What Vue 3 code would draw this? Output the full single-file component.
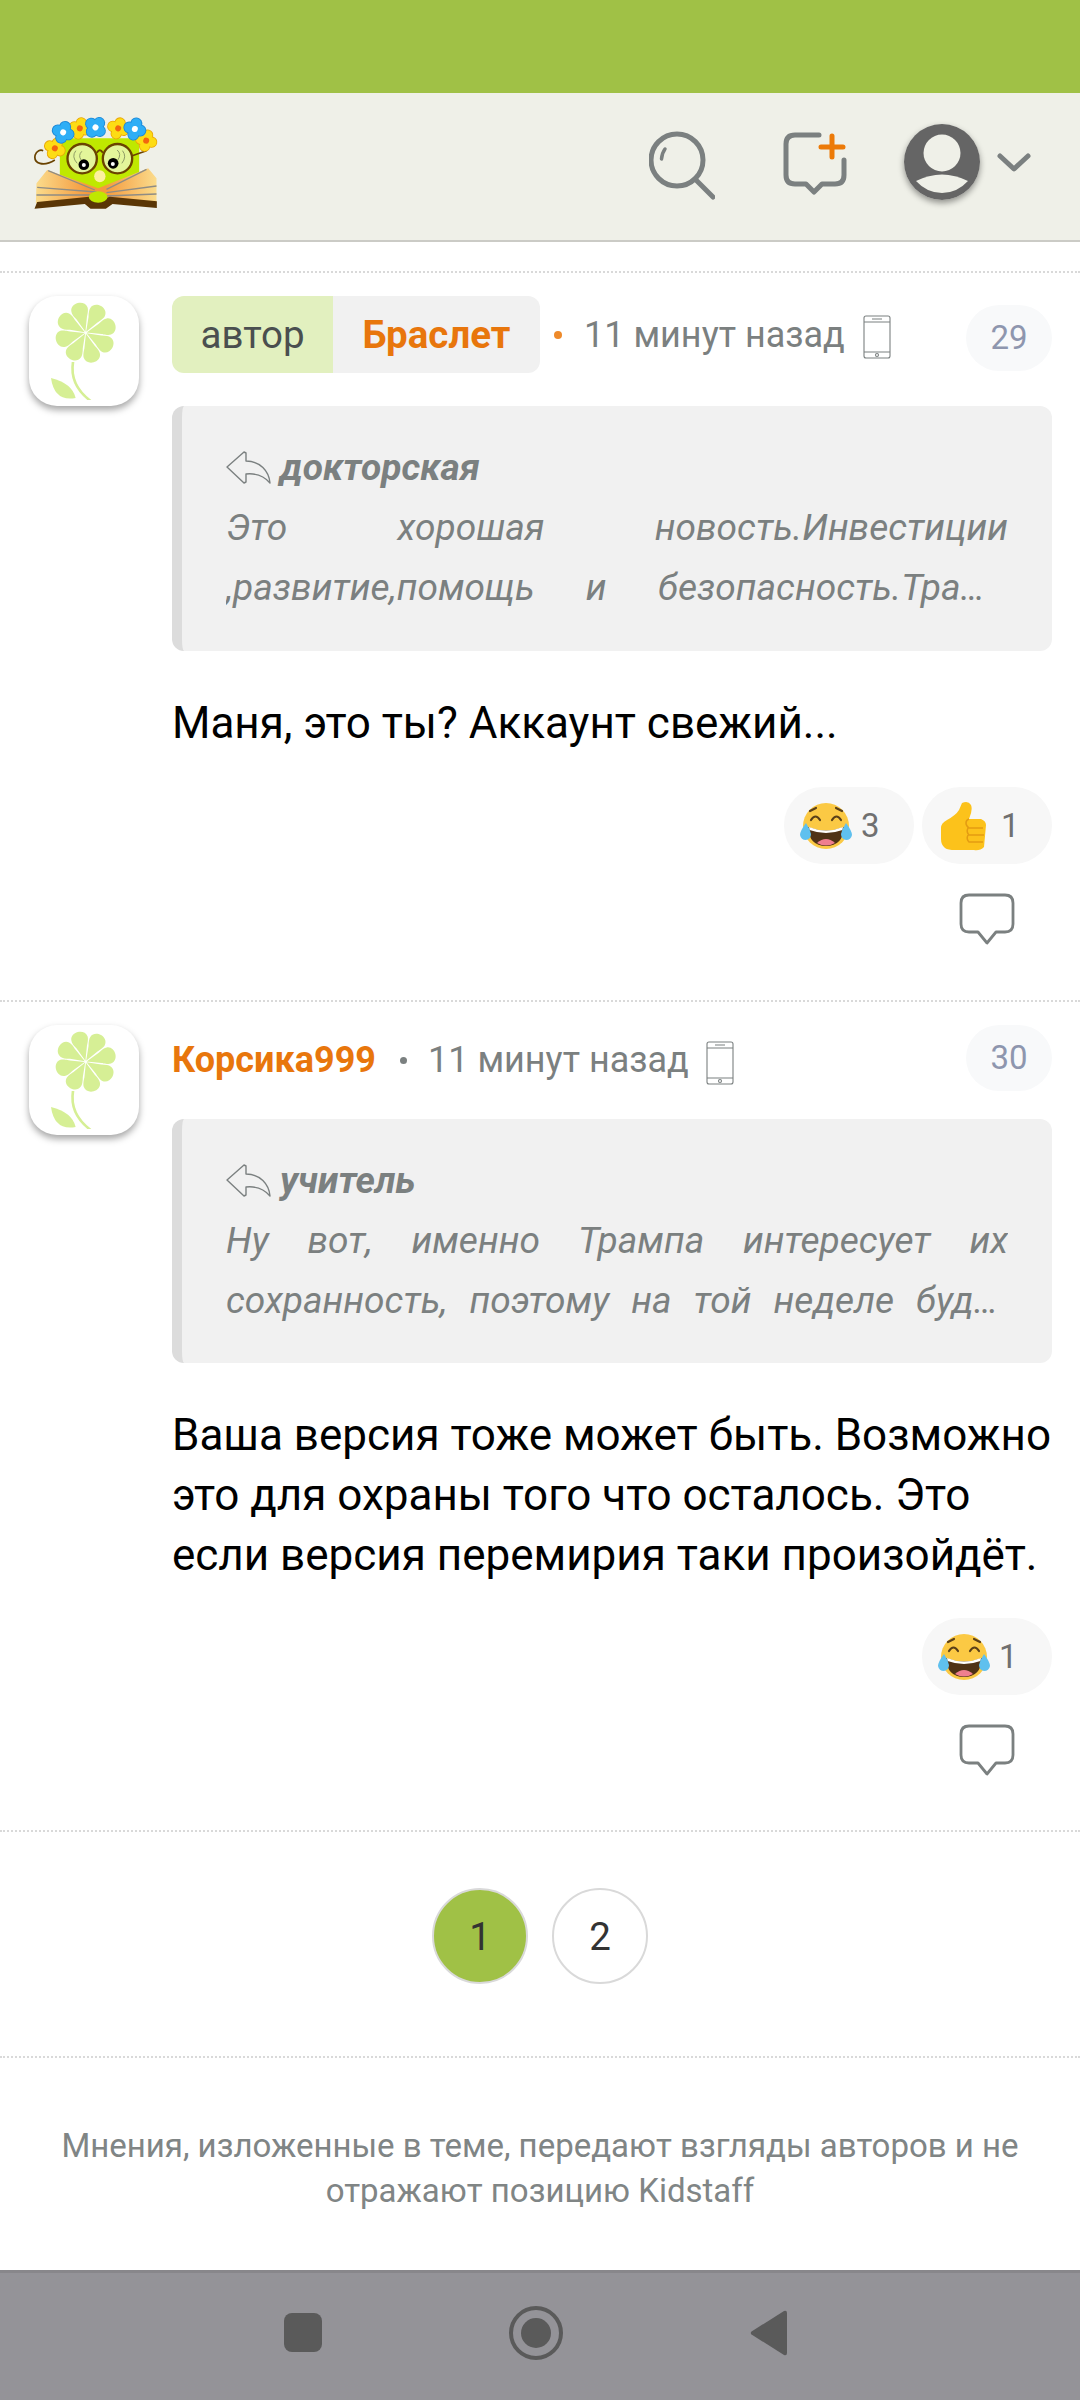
<script setup>
const comments = [
  {
    id: 1, num: 29, isAuthor: true, name: 'Браслет', quoteName: 'докторская',
    quote: 'Это хорошая новость.Инвестиции ,развитие,помощь и безопасность.Трамп хорошо понимает что происходит и это всем нам на пользу',
    body: 'Маня, это ты? Аккаунт свежий...',
    reactions: [{ k: 'laugh', n: 3 }, { k: 'thumb', n: 1 }],
  },
  {
    id: 2, num: 30, isAuthor: false, name: 'Корсика999', quoteName: 'учитель',
    quote: 'Ну вот, именно Трампа интересует их сохранность, поэтому на той неделе будут переговоры и наверное какие-то решения',
    body: 'Ваша версия тоже может быть. Возможно это для охраны того что осталось. Это если версия перемирия таки произойдёт.',
    reactions: [{ k: 'laugh', n: 1 }],
  },
]
const petals = [0, 45, 90, 135, 180, 225, 270, 315]
</script>

<template>
  <div class="page">
    <div class="status"></div>
    <header class="top">
      <svg class="logo" viewBox="100 90 380 300">
        <defs>
          <g id="fb">
            <g fill="#1a86d6"><circle cx="0" cy="-17" r="18"/><circle cx="17" cy="0" r="18"/><circle cx="0" cy="17" r="18"/><circle cx="-17" cy="0" r="18"/></g>
            <g fill="#2eaef6"><circle cx="0" cy="-17" r="15.500"/><circle cx="17" cy="0" r="15.500"/><circle cx="0" cy="17" r="15.500"/><circle cx="-17" cy="0" r="15.500"/></g>
            <circle r="9" fill="#fff"/>
          </g>
          <g id="fy">
            <g fill="#e9a506"><circle cx="0" cy="-17" r="17"/><circle cx="17" cy="0" r="17"/><circle cx="0" cy="17" r="17"/><circle cx="-17" cy="0" r="17"/></g>
            <g fill="#fddc14"><circle cx="0" cy="-17" r="14.500"/><circle cx="17" cy="0" r="14.500"/><circle cx="0" cy="17" r="14.500"/><circle cx="-17" cy="0" r="14.500"/></g>
            <circle r="9" fill="#f2660f"/>
          </g>
          <linearGradient id="pg" x1="0" x2="1" y1="0" y2="0">
            <stop offset="0" stop-color="#fbdc8c"/><stop offset=".42" stop-color="#f49a3e"/>
            <stop offset=".58" stop-color="#f49a3e"/><stop offset="1" stop-color="#fbdc8c"/>
          </linearGradient>
        </defs>
        <path d="M180 175H418V300L300 340 180 300Z" fill="#bfe800"/>
        <path d="M165 240C130 262 100 250 106 225 110 212 122 208 130 212" fill="none" stroke="#6a4300" stroke-width="5"/>
        <path d="M395 228L440 212" stroke="#6a4300" stroke-width="5"/>
        <use href="#fy" transform="translate(165 205) rotate(25)"/>
        <use href="#fy" transform="translate(240 145) rotate(15)"/>
        <use href="#fy" transform="translate(355 145) rotate(20)"/>
        <use href="#fy" transform="translate(439 182) rotate(15)"/>
        <use href="#fb" transform="translate(190 157) rotate(20)"/>
        <use href="#fb" transform="translate(287 142) rotate(40)"/>
        <use href="#fb" transform="translate(405 147) rotate(15)"/>
        <circle cx="247" cy="236" r="44" fill="#e3f59a" stroke="#6a4300" stroke-width="7"/>
        <circle cx="353" cy="236" r="44" fill="#e3f59a" stroke="#6a4300" stroke-width="7"/>
        <path d="M291 218Q300 204 309 218" fill="none" stroke="#6a4300" stroke-width="6"/>
        <path d="M228 212Q214 230 232 250M246 214Q234 226 244 240M352 210Q366 222 354 240M368 212Q382 230 366 250" fill="none" stroke="#8f9c66" stroke-width="3"/>
        <circle cx="252" cy="254" r="16" fill="#000"/><circle cx="252" cy="255" r="6" fill="#fff"/>
        <circle cx="340" cy="250" r="16" fill="#000"/><circle cx="339" cy="252" r="6" fill="#fff"/>
        <ellipse cx="300" cy="289" rx="17" ry="18" fill="#fdf0a0"/>
        <path d="M110 310L142 270 295 325 445 265 470 295V370H108Z" fill="url(#pg)"/>
        <path d="M112 322L290 336M110 345L285 345M145 272L285 330M470 318L320 338M470 342L320 348M440 268L320 328" stroke="#8f8c84" stroke-width="4" fill="none"/>
        <path d="M104 386L112 366 268 350 295 362 330 350 471 364V384L338 372 318 386H272L255 372Z" fill="#5a3606"/>
        <ellipse cx="295" cy="351" rx="28" ry="17" fill="#bfe800"/>
      </svg>
      <div class="actions">
        <svg class="ic-search" viewBox="0 0 66 72" fill="none" stroke="#7b8080" stroke-linecap="round">
          <circle cx="28" cy="29" r="26" stroke-width="5"/>
          <path d="M46 48L64 66" stroke-width="5"/>
          <path d="M16 18Q13 22 12.500 28" stroke-width="3.500"/>
        </svg>
        <svg class="ic-add" viewBox="0 0 64 64" fill="none">
          <path d="M36 3H12Q3 3 3 12V43Q3 52 12 52H23L31 60 39 52H52Q61 52 61 43V28" stroke="#7b8080" stroke-width="5" stroke-linecap="round" stroke-linejoin="round"/>
          <path d="M49 4V25M38 15H60" stroke="#ec7a08" stroke-width="5" stroke-linecap="round"/>
        </svg>
        <div class="user">
          <svg viewBox="0 0 76 76">
            <circle cx="38" cy="38" r="38" fill="#656565"/>
            <circle cx="38" cy="29" r="18.500" fill="#eff0e8"/>
            <path d="M12 57Q38 44 64 57 53 69 38 69 23 69 12 57Z" fill="#eff0e8"/>
          </svg>
        </div>
        <svg class="ic-chev" viewBox="0 0 34 20" fill="none"><path d="M3 3L17 16 31 3" stroke="#7b8080" stroke-width="5" stroke-linecap="round" stroke-linejoin="round"/></svg>
      </div>
    </header>

    <main class="list">
      <article v-for="c in comments" :key="c.id" class="comment" :class="{ second: !c.isAuthor }">
        <div class="avatar">
          <svg viewBox="0 0 330 330">
            <path d="M136 198Q125 265 187 312H175Q118 265 128 198Z" fill="#d6ef95"/>
            <path d="M66 246Q130 262 140 306 76 318 66 246Z" fill="#d6ef95"/>
            <g fill="#d6ef95">
              <path v-for="p in petals" :key="p" d="M170 107L154 65Q144 48 145 38C146 25 158 18 170 18 182 18 194 25 195 38 196 48 186 65 186 65Z" :transform="`rotate(${p - 15} 170 110)`"/>
            </g>
          </svg>
        </div>
        <div class="main">
          <div class="meta">
            <div v-if="c.isAuthor" class="badge"><span class="role">автор</span><span class="bname">{{ c.name }}</span></div>
            <span v-else class="name">{{ c.name }}</span>
            <i class="dot"></i>
            <span class="time">11 минут назад</span>
            <svg class="phone" viewBox="0 0 28 44" fill="none" stroke="#7b8080" stroke-width="1.100">
              <rect x="1" y="1" width="26" height="42" rx="2"/>
              <path d="M1 7H27M1 37H27M9 4H19"/>
              <circle cx="14" cy="40" r="1.500"/>
            </svg>
            <span class="num">{{ c.num }}</span>
          </div>
          <blockquote class="quote">
            <div class="qhead">
              <svg viewBox="0 0 46 34" fill="none" stroke="#7b8080" stroke-width="1.400" stroke-linejoin="round">
                <path d="M18 1L1 16 18 32 20 31V23C30 22 38 25 44 32 43 20 34 10 20 10V2Z"/>
              </svg>
              <b>{{ c.quoteName }}</b>
            </div>
            <div class="qtext">{{ c.quote }}</div>
          </blockquote>
          <p class="body">{{ c.body }}</p>
          <div class="reactions">
            <div v-for="r in c.reactions" :key="r.k" class="pill">
              <svg v-if="r.k === 'laugh'" class="emoji" viewBox="0 0 54 48">
                <circle cx="27" cy="24" r="23" fill="#fbc944"/>
                <path d="M12 18Q16.500 11 21 18M33 18Q37.500 11 42 18M11 9L17 6M43 9L37 6" fill="none" stroke="#5b4018" stroke-width="2.200" stroke-linecap="round"/>
                <path d="M9 25Q27 32 45 25 44 44 27 44 10 44 9 25Z" fill="#4f3216"/>
                <path d="M10 25Q27 32 44 25L43.500 28Q27 34 10.500 28Z" fill="#fff"/>
                <path d="M18 41Q27 33 36 41 27 46 18 41Z" fill="#ef7f8f"/>
                <path d="M7 21Q1 29 1 33 2 38 7 38 12 37 12 32 11 27 7 21ZM47 21Q53 29 53 33 52 38 47 38 42 37 42 32 43 27 47 21Z" fill="#5fc0ee"/>
              </svg>
              <svg v-else class="emoji thumb" viewBox="0 0 47 50">
                <path d="M1 27Q1 22 7 19 16 14 19 9L22 2Q28 -1 31 4 33 9 29 18H41Q46 20 46 24L44 46Q40 50 34 49H15Q8 49 5 47 1 44 1 38Z" fill="#fcc21b"/>
                <path d="M29 18Q26 19 26 22T29 27H43M28 27Q26 31 29 34H44M28 34Q26 38 29 41H43" fill="none" stroke="#e39c12" stroke-width="1.500"/>
              </svg>
              <span>{{ r.n }}</span>
            </div>
          </div>
          <div class="reply">
            <svg viewBox="0 0 56 52" fill="none"><path d="M10 2H46Q54 2 54 10V31Q54 39 46 39H37L28 50 19 39H10Q2 39 2 31V10Q2 2 10 2Z" stroke="#7b8080" stroke-width="2.800" stroke-linejoin="round"/></svg>
          </div>
        </div>
      </article>
    </main>

    <nav class="pager">
      <span class="pg active">1</span>
      <span class="pg">2</span>
    </nav>

    <footer class="note">Мнения, изложенные в теме, передают взгляды авторов и не отражают позицию Kidstaff</footer>

    <div class="navbar">
      <span class="nb-square"></span>
      <svg class="nb-home" viewBox="0 0 54 54" fill="none"><circle cx="27" cy="27" r="25" stroke="#5a5a5a" stroke-width="4"/><circle cx="27" cy="27" r="15" fill="#5a5a5a"/></svg>
      <svg class="nb-back" viewBox="0 0 37 46"><path d="M34 1L1.500 21.500Q0 23 1.500 24.500L34 45Q37 46 37 43V3Q37 0 34 1Z" fill="#5a5a5a"/></svg>
    </div>
  </div>
</template>

<style>
html, body { margin: 0; background: #fff; }
</style>

<style scoped>
.page {
  width: 1080px; height: 2400px; display: flex; flex-direction: column; overflow: hidden;
  font-family: Roboto, "Noto Sans", sans-serif; color: #000; background: #fff;
}
.status { height: 93px; background: #a0c146; flex: none; }
.top {
  height: 149px; box-sizing: border-box; flex: none; background: #eff0e8; border-bottom: 2px solid #cbcbc6;
  display: flex; align-items: flex-start; justify-content: space-between;
}
.logo { width: 127px; height: 100px; margin: 17px 0 0 33px; }
.actions { display: flex; align-items: flex-start; margin: 0 49px 0 0; }
.ic-search { width: 66px; height: 72px; margin-top: 38px; }
.ic-add { width: 64px; height: 64px; margin: 39px 0 0 68px; }
.user { width: 76px; height: 76px; margin: 31px 0 0 57px; border-radius: 50%; box-shadow: 0 3px 6px rgba(0, 0, 0, .4); }
.user svg { display: block; width: 76px; height: 76px; }
.ic-chev { width: 34px; height: 20px; margin: 60px 0 0 17px; }

.list { margin-top: 29px; border-top: 2px dotted #d9d9d9; flex: none; }
.comment {
  display: flex; gap: 33px; padding: 23px 28px 55px 29px; border-bottom: 2px dotted #d9d9d9;
}
.comment.second { padding-bottom: 54px; }
.avatar {
  width: 110px; height: 110px; flex: none; background: #fff; border-radius: 28px;
  box-shadow: 0 4px 7px rgba(0, 0, 0, .35);
}
.avatar svg { display: block; width: 110px; height: 110px; }
.main { flex: 1; min-width: 0; }
.meta { display: flex; align-items: center; height: 77px; margin-bottom: 33px; font-size: 36px; color: #7b8080; }
.second .meta { height: 66px; margin-bottom: 28px; }
.second .name, .second .time { margin-top: 4px; }
.badge { display: flex; height: 77px; border-radius: 12px; overflow: hidden; line-height: 77px; font-size: 38.500px; }
.role { width: 161px; background: #e2f0bf; color: #4a4f4f; text-align: center; }
.bname { width: 207px; background: #f1f1f1; color: #e8760c; font-weight: 700; text-align: center; }
.name { color: #e8760c; font-weight: 700; }
.dot { width: 8px; height: 8px; border-radius: 50%; background: #ee8a2a; margin: 0 22px 0 14px; }
.second .dot { background: #7b8080; width: 7px; height: 7px; margin: 4px 21px 0 24px; }
.phone { width: 28px; height: 44px; margin: 4px 0 0 18px; }
.second .phone { margin: 10px 0 0 17px; }
.num {
  margin: 6px 0 0 auto; width: 86px; height: 66px; border-radius: 33px; background: #f8f9fa; color: #8e96ae;
  font-size: 33px; line-height: 66px; text-align: center;
}
.second .num { margin-top: 0; }
.quote {
  margin: 0; box-sizing: border-box; height: 245px; padding: 32px 44px 0; background: #f1f1f1;
  border-left: 10px solid #dcdcdc; border-radius: 12px; color: #7b8080; font-size: 37.100px; font-style: italic; line-height: 60px;
}
.second .quote { height: 244px; }
.qhead { display: flex; align-items: center; height: 60px; }
.qhead svg { width: 46px; height: 34px; margin-right: 8px; }
.qhead b { font-weight: 700; }
.qtext {
  display: -webkit-box; -webkit-box-orient: vertical; -webkit-line-clamp: 2; overflow: hidden;
  text-align: justify;
}
.body { margin: 42px 0 34px; font-size: 44px; line-height: 60px; }
.second .body { margin-bottom: 33px; }
.reactions { display: flex; justify-content: flex-end; gap: 8px; }
.pill {
  width: 130px; height: 77px; box-sizing: border-box; padding-left: 15px; border-radius: 38px; background: #f7f7f7;
  display: flex; align-items: center; font-size: 33px; color: #707070;
}
.emoji { width: 54px; height: 48px; margin-right: 8px; }
.thumb { width: 47px; height: 50px; margin-right: 14px; margin-left: 3px; }
.reply { display: flex; justify-content: flex-end; margin: 29px 37px 0 0; height: 52px; }
.reply svg { width: 56px; height: 52px; }

.pager { display: flex; justify-content: center; gap: 24px; padding: 56px 0 72px; border-bottom: 2px dotted #d9d9d9; flex: none; }
.pg {
  width: 96px; height: 96px; box-sizing: border-box; border: 2px solid #d9d9d9; border-radius: 50%;
  display: flex; align-items: center; justify-content: center; font-size: 38.500px; color: #333;
}
.active { background: #a0c146; }
.note { margin: 65px 50px 0; font-size: 33px; line-height: 45px; color: #808585; text-align: center; flex: none; }
.navbar {
  margin-top: auto; height: 130px; box-sizing: border-box; flex: none; background: #949398; border-top: 3px solid #88878b;
  display: flex; align-items: center; padding: 0 0 8px 284px;
}
.nb-square { width: 38px; height: 39px; border-radius: 8px; background: #5a5a5a; }
.nb-home { width: 54px; height: 54px; margin-left: 187px; }
.nb-back { width: 37px; height: 46px; margin-left: 187px; }
</style>
